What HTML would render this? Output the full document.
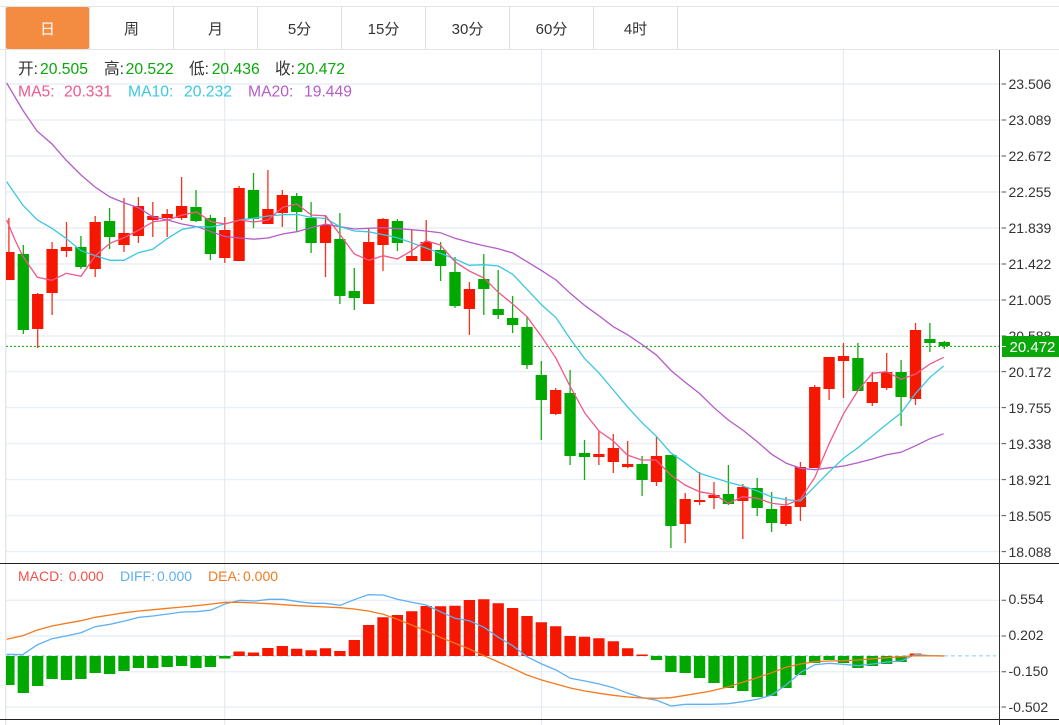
<!DOCTYPE html>
<html lang="zh">
<head>
<meta charset="utf-8">
<title>K线图</title>
<style>
html,body{margin:0;padding:0;background:#fff;width:1059px;height:725px;overflow:hidden}
svg{position:absolute;left:0;top:0;display:block}
text{font-family:"Liberation Sans","Noto Sans CJK SC",sans-serif}
</style>
</head>
<body>
<svg width="1059" height="725" viewBox="0 0 1059 725" xmlns="http://www.w3.org/2000/svg">
<defs><clipPath id="c"><rect x="6" y="50" width="993" height="675"/></clipPath></defs>
<rect width="1059" height="725" fill="#fff"/>

<!-- tabs -->
<path d="M0 6.5H1059M0 49.5H1059" stroke="#e2e4e6" stroke-width="1"/>
<path d="M5.5 6V50M89.5 6V49M173.5 6V49M257.5 6V49M341.5 6V49M425.5 6V49M509.5 6V49M593.5 6V49M677.5 6V49" stroke="#dddfe1" stroke-width="1"/>
<rect x="6" y="7" width="83" height="42" rx="2" fill="#f38b41"/>
<g font-size="15" fill="#333" text-anchor="middle">
<text x="47.5" y="34" fill="#fff">日</text>
<text x="131.5" y="34">周</text>
<text x="215.5" y="34">月</text>
<text x="299.5" y="34">5分</text>
<text x="383.5" y="34">15分</text>
<text x="467.5" y="34">30分</text>
<text x="551.5" y="34">60分</text>
<text x="635.5" y="34">4时</text>
</g>

<!-- grid -->
<path d="M6 84H999M6 120H999M6 156H999M6 192H999M6 228H999M6 264H999M6 300H999M6 336H999M6 371.6H999M6 407.6H999M6 443.6H999M6 479.6H999M6 515.6H999M6 551.6H999M6 600.3H999M6 636H999M6 671.7H999M6 707H999" stroke="#e9eff5" stroke-width="1.4"/>
<path d="M224.7 50V725M541.5 50V725M843.4 50V725" stroke="#e4ecf3" stroke-width="1.2"/>
<path d="M5.8 50V725" stroke="#dfe5ea" stroke-width="1.2"/>

<!-- price dotted line -->
<path d="M6 346.4H999" stroke="#0aa80a" stroke-width="1" stroke-dasharray="2 2"/>

<g clip-path="url(#c)" fill="none">
<!-- candles -->
<path stroke="#f5321e" stroke-width="1.3" d="M8.9 218V280M37.7 293V348M52.1 242V315M66.5 222V257M95.2 216V277M124 198V252M138.4 197V243M152.8 202V237M167.2 209V237M181.6 177V220M224.8 217V263M239.1 186V261M267.9 170V224M282.3 190V227M325.5 215V277M368.7 228V304M383 218V271M411.8 229V261M426.2 220V261M469.4 282V335M555.7 388V415M598.9 431V465M613.3 434V473M627.7 441V468M656.5 437V486M685.2 493V543M699.6 472V505M714 482V509M742.8 484V539M786 497V526M800.4 462V521M814.7 385V468M829.1 357V400M843.5 343V398M872.3 372V406M886.7 353V390M915.5 323V405"/>
<path stroke="#f51700" stroke-width="11.3" d="M8.9 252V280M37.7 294V329M52.1 249V293M66.5 247V251M95.2 222V269M124 233V245M138.4 206V236M152.8 216V220M167.2 214V218M181.6 206V218M224.8 230V258M239.1 188V261M267.9 209V224M282.3 195V213M325.5 225V243M368.7 242V304M383 219V245M411.8 256V261M426.2 242V261M469.4 289V309M555.7 390V414M598.9 454V457M613.3 448V462M627.7 464V467M656.5 456V482M685.2 499V524M699.6 500V502M714 495V498M742.8 487V501M786 506V524M800.4 467V507M814.7 387V468M829.1 357V389M843.5 356V361M872.3 382V403M886.7 372V388M915.5 330V399"/>
<path stroke="#12ab12" stroke-width="1.3" d="M23.3 245V334M80.9 236V269M109.6 208V249M196 190V222M210.4 215V260M253.5 173V228M296.7 193V231M311.1 202V253M339.9 213V304M354.3 268V310M397.4 219V251M440.6 242V281M455 257V308M483.8 254V315M498.2 270V319M512.6 296V333M527 317V369M541.3 361V440M570.1 370V465M584.5 440V480M642.1 456V496M670.9 455V548M728.4 465V505M757.2 478V516M771.6 492V532M857.9 343V391M901.1 360V426M929.9 323V352M944.3 341V349"/>
<path stroke="#00a800" stroke-width="11.3" d="M23.3 254V330M80.9 247V267M109.6 221V237M196 207V221M210.4 218V254M253.5 190V219M296.7 196V212M311.1 218V243M339.9 239V296M354.3 291V298M397.4 221V243M440.6 250V266M455 272V306M483.8 279V289M498.2 309V315M512.6 318V325M527 327V365M541.3 375V400M570.1 393V456M584.5 453V457M642.1 464V480M670.9 455V526M728.4 494V504M757.2 488V508M771.6 509V523M857.9 358V391M901.1 372V397M929.9 339V343M944.3 342V346"/>

<!-- MA lines -->
<polyline stroke="#b45cc8" stroke-width="1.3" points="6.7,83 22.7,110 37,131 52,144 66,160 81,175 95,187 110,197 124.7,203 139,208 153,217 167.7,220 182,224 197,226.7 211,231.7 225,236.5 240,238 254,239.2 268,238 282.7,234 296.7,231.7 311.5,227.5 325.7,224.2 340,226.7 354.3,229 368.5,228.3 383,227.7 397.3,228.7 411.7,229.7 426,231 440.3,232.7 455,238.3 469.3,242.3 484,245.7 498.3,248.7 512.7,253 527,261.7 541.7,270.7 556,280 570.3,293.3 585,305.7 599.3,316 613.3,326.7 628,335 642.7,345 656.7,355.3 671,370.5 685.5,382.5 699.3,393.3 714,407.7 728.3,420 742.7,430 757.3,441.7 771.7,454.3 786.3,463.3 800.5,468.3 815,469.7 829.3,467.8 843.8,466 858,462.7 872.3,459 886.7,454.7 901,452.3 915.7,445.7 930,438.7 943.7,433.7"/>
<polyline stroke="#3cc8e0" stroke-width="1.3" points="6.7,181.7 22.7,205 37.3,220 52,228.3 66,238.3 81,250.7 95.3,255.7 110,260.3 124,260.3 138.3,252.7 152.7,249.3 167.7,238.3 182.3,229.3 196.7,226.7 211,227 225,224 239.5,220 254,218.2 268.5,216 283,214.7 297.5,214.5 312,217.5 325.5,218.5 340,226.7 354.3,231 368.5,231.8 383.3,234.7 397.3,237.7 411.7,242.7 426,248 440.3,253.3 455,259 469.3,265.3 484,264.7 498.3,266 512.7,274.3 527,289.3 541.7,305 556,317.7 570.3,339 585,359 599.3,373.3 613.3,390 627.3,406.7 641.7,422.3 656,436 670.7,452.7 685,462.7 699.3,473.3 714,477.7 728.3,482.3 742.7,486 757.3,491 771.7,497 786.3,499.7 800.5,501 815,486.2 829.3,471.7 843.8,458 858,447.7 872.3,436 886.7,424.3 901,413 915.7,393.3 930,377.3 943.7,366"/>
<polyline stroke="#f0588a" stroke-width="1.3" points="6.7,220 15,240 22.7,256 37.3,277.3 52,280.3 66.3,273.3 81,276.3 95.3,255.7 110,243.3 124.7,237.3 139,230 153.3,221.7 167.7,220 182.3,215 196.7,212 211,221.7 225,224 239.5,220 253.5,222 268,220 282.7,207.3 296.7,204 311.3,215 325.7,215.8 340,234.5 354.3,254 369,260.3 383.3,255.7 397.3,259 411.7,250.7 426,240.7 440.3,245 455,261.7 469.3,271 484,278 498.3,292.3 512.7,304 527,316.7 541.7,336.7 556,358.3 570.3,386.7 585,413.3 599,431 613.3,441 627.3,455 641.7,460 656,460 670.7,475 685,485 699.3,491.7 714,494.3 728.3,503.3 742.7,496.7 757.3,498.3 771.7,503.3 786.3,505 800.5,499 814.8,477.5 829.3,443.3 843.8,413.3 858,390.5 872.3,373.3 886.7,371.7 901,379.3 915.7,374 930,364 943.7,357.3"/>

<!-- MACD -->
<path d="M6 655.8H996" stroke="#a9dbf0" stroke-width="1.3" stroke-dasharray="4 3"/>
<path stroke="#00a800" stroke-width="11.3" d="M8.9 656V685M23.3 656V693M37.7 656V686M52.1 656V679M66.5 656V680M80.9 656V679M95.2 656V673M109.6 656V674M124 656V671M138.4 656V668M152.8 656V668M167.2 656V667M181.6 656V666M196 656V668M210.4 656V667M224.8 656V658.5M656.5 656V660M670.9 656V672M685.2 656V673M699.6 656V678M714 656V683M728.4 656V688M742.8 656V691M757.2 656V697M771.6 656V696M786 656V688M800.4 656V675M814.7 656V663M829.1 656V660M843.5 656V663M857.9 656V668M872.3 656V666M886.7 656V664M901.1 656V662"/>
<path stroke="#f51700" stroke-width="11.3" d="M239.1 651.5V656M253.5 652.5V656M267.9 648V656M282.3 646V656M296.7 648.7V656M311.1 650.3V656M325.5 648.3V656M339.9 651V656M354.3 640V656M368.7 625V656M383 617.3V656M397.4 615V656M411.8 611.3V656M426.2 606V656M440.6 606.3V656M455 605.7V656M469.4 600V656M483.8 599.3V656M498.2 603.3V656M512.6 608V656M527 616V656M541.3 622.3V656M555.7 626.3V656M570.1 636V656M584.5 636.7V656M598.9 638.3V656M613.3 641.3V656M627.7 648.3V656M642.1 654.5V656M915.5 653.5V656"/>
<polyline stroke="#5fb0f0" stroke-width="1.3" points="6.7,654.3 22.7,654.7 37,645 52,638.7 66,636 81,632.7 95,626.7 110,624.3 124.7,621 139,617.3 153,616 167.7,614 182.3,612 196.7,611.7 211.3,610 225.7,603.7 240,600.3 255,601 269.3,599.3 283.3,599.3 298.3,601.7 312.7,603.3 325.3,603.3 340,605.3 354.3,599.7 368.3,594.7 383.3,595 397.3,599.3 411.7,602.3 426,605 440.3,611.7 455,618.3 469.3,620.7 484,627.3 498.3,637.3 512.7,645.7 527,656.7 541.7,664 556,670 570.3,678.3 585,681 599.3,684 613.3,687.7 628,693.3 642.7,697.7 656.7,700.3 671,706 685.7,704.3 710,704.3 728.3,703.7 742.7,701.7 757.3,699.3 771.7,695 786,685 800.3,672.7 814.7,664.7 829.3,663.3 843.3,664.3 858.3,665.7 872.7,664 887,662 901.3,661 915.7,654.3 930,655.7 944.3,656"/>
<polyline stroke="#f47a1f" stroke-width="1.3" points="6.7,639.3 22.7,635.7 37.3,630 52,626 66.3,623.3 81,620.7 95.3,617.3 110,615 124.7,612.7 139,611 153.3,609.7 167.7,608.3 182.3,607 196.7,605.7 211.3,604 225.7,602.3 240,602.3 255,603 269.3,603.7 283.3,604.7 298.3,605.7 312.7,606.3 325.3,607 340,607.7 354.3,609 368.3,611 383.3,614.3 397.3,619.3 411.7,625 426,631 440.3,637.3 455,643.3 469.3,649 484,655.7 498.3,662 512.7,668.3 527,675 541.7,680 556,684 570.3,688 585,691 599.3,693.3 613.3,695.3 628,697 642.7,698 656.7,698.3 671,697.7 685.7,695.3 710,691.3 728.3,686.7 742.7,682.3 757.3,677.7 771.7,672.7 786,667.3 800.3,664 814.7,661.7 829.3,661 843.3,660.7 858.3,660 872.7,658.7 887,657.7 901.3,656.7 915.7,655.7 944.3,656"/>
</g>

<!-- axes -->
<path d="M0 563.5H1059M0 719.5H1059" stroke="#222" stroke-width="1"/>
<path d="M999.5 50V725" stroke="#333" stroke-width="1"/>
<path d="M1001.5 84H1006M1001.5 120H1006M1001.5 156H1006M1001.5 192H1006M1001.5 228H1006M1001.5 264H1006M1001.5 300H1006M1001.5 336H1006M1001.5 371.6H1006M1001.5 407.6H1006M1001.5 443.6H1006M1001.5 479.6H1006M1001.5 515.6H1006M1001.5 551.6H1006M1001.5 600.3H1006M1001.5 636H1006M1001.5 671.7H1006M1001.5 707H1006" stroke="#555" stroke-width="1"/>

<g font-size="14" fill="#333">
<text x="1008.5" y="89">23.506</text>
<text x="1008.5" y="125">23.089</text>
<text x="1008.5" y="161">22.672</text>
<text x="1008.5" y="197">22.255</text>
<text x="1008.5" y="233">21.839</text>
<text x="1008.5" y="269">21.422</text>
<text x="1008.5" y="305">21.005</text>
<text x="1008.5" y="341">20.588</text>
<text x="1008.5" y="377">20.172</text>
<text x="1008.5" y="413">19.755</text>
<text x="1008.5" y="449">19.338</text>
<text x="1008.5" y="485">18.921</text>
<text x="1008.5" y="521">18.505</text>
<text x="1008.5" y="557">18.088</text>
<text x="1008.5" y="604">0.554</text>
<text x="1008.5" y="640">0.202</text>
<text x="1008.5" y="676">-0.150</text>
<text x="1008.5" y="712">-0.502</text>
</g>
<rect x="1002" y="336" width="57" height="21" fill="#0aa80a"/>
<path d="M1002 346.5H1006" stroke="#fff" stroke-width="1"/>
<text x="1009.5" y="352" font-size="15" fill="#fff">20.472</text>

<!-- legends -->
<g font-size="15.7">
<text x="18" y="74" fill="#333">开:</text><text x="40" y="74" fill="#0aa80a">20.505</text>
<text x="104" y="74" fill="#333">高:</text><text x="125.6" y="74" fill="#0aa80a">20.522</text>
<text x="189" y="74" fill="#333">低:</text><text x="211.7" y="74" fill="#0aa80a">20.436</text>
<text x="275" y="74" fill="#333">收:</text><text x="297" y="74" fill="#0aa80a">20.472</text>
</g>
<g font-size="15.7">
<text x="18" y="96.5" fill="#f0588a">MA5:</text><text x="64" y="96.5" fill="#f0588a">20.331</text>
<text x="128" y="96.5" fill="#3cc8e0">MA10:</text><text x="184" y="96.5" fill="#3cc8e0">20.232</text>
<text x="248" y="96.5" fill="#b45cc8">MA20:</text><text x="304" y="96.5" fill="#b45cc8">19.449</text>
</g>
<g font-size="14">
<text x="18" y="581" fill="#f5504a">MACD:</text><text x="68.7" y="581" fill="#f5504a">0.000</text>
<text x="120" y="581" fill="#5fb0f0">DIFF:</text><text x="157" y="581" fill="#5fb0f0">0.000</text>
<text x="208" y="581" fill="#f47a1f">DEA:</text><text x="243" y="581" fill="#f47a1f">0.000</text>
</g>
</svg>
</body>
</html>
